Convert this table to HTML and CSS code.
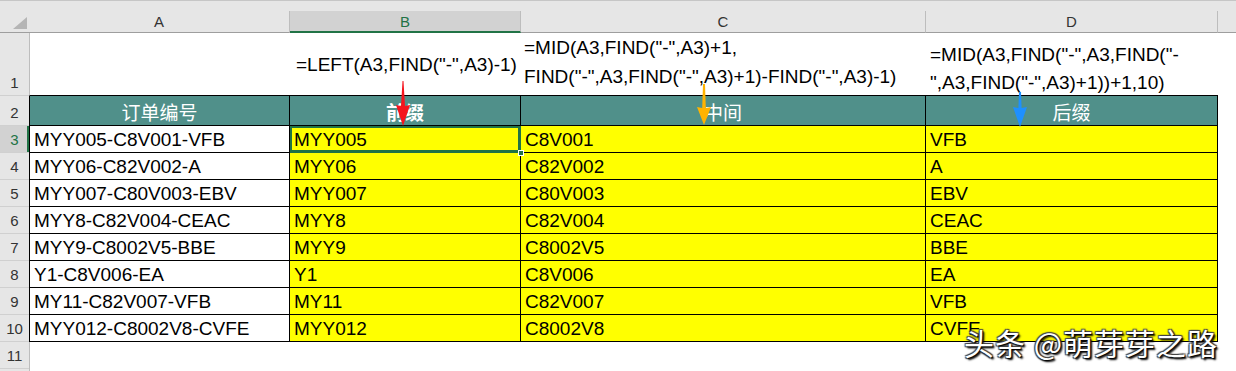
FILE: index.html
```html
<!DOCTYPE html>
<html>
<head>
<meta charset="utf-8">
<link rel="stylesheet" href="styles.css">
</head>
<body>
<div class="sheet">
  <div class="strip"></div>

  <div class="ch corner"><span class="tri"></span></div>
  <div class="ch">A</div>
  <div class="ch sel">B</div>
  <div class="ch">C</div>
  <div class="ch">D</div>
  <div class="ch last"></div>

  <div class="rh">1</div>
  <div class="c fa"></div>
  <div class="c fr fb">=LEFT(A3,FIND("-",A3)-1)</div>
  <div class="c fr fc">=MID(A3,FIND("-",A3)+1,<br>FIND("-",A3,FIND("-",A3)+1)-FIND("-",A3)-1)</div>
  <div class="c fr fd">=MID(A3,FIND("-",A3,FIND("-<br>",A3,FIND("-",A3)+1))+1,10)</div>
  <div class="c e"></div>

  <div class="rh">2</div>
  <div class="c hd a">订单编号</div>
  <div class="c hd bold">前缀</div>
  <div class="c hd">中间</div>
  <div class="c hd">后缀</div>
  <div class="c e"></div>

  <div class="rh rsel">3</div>
  <div class="c t a">MYY005-C8V001-VFB</div>
  <div class="c t y active">MYY005<span class="handle"></span></div>
  <div class="c t y">C8V001</div>
  <div class="c t y">VFB</div>
  <div class="c e"></div>

  <div class="rh">4</div>
  <div class="c t a">MYY06-C82V002-A</div>
  <div class="c t y">MYY06</div>
  <div class="c t y">C82V002</div>
  <div class="c t y">A</div>
  <div class="c e"></div>

  <div class="rh">5</div>
  <div class="c t a">MYY007-C80V003-EBV</div>
  <div class="c t y">MYY007</div>
  <div class="c t y">C80V003</div>
  <div class="c t y">EBV</div>
  <div class="c e"></div>

  <div class="rh">6</div>
  <div class="c t a">MYY8-C82V004-CEAC</div>
  <div class="c t y">MYY8</div>
  <div class="c t y">C82V004</div>
  <div class="c t y">CEAC</div>
  <div class="c e"></div>

  <div class="rh">7</div>
  <div class="c t a">MYY9-C8002V5-BBE</div>
  <div class="c t y">MYY9</div>
  <div class="c t y">C8002V5</div>
  <div class="c t y">BBE</div>
  <div class="c e"></div>

  <div class="rh">8</div>
  <div class="c t a">Y1-C8V006-EA</div>
  <div class="c t y">Y1</div>
  <div class="c t y">C8V006</div>
  <div class="c t y">EA</div>
  <div class="c e"></div>

  <div class="rh">9</div>
  <div class="c t a">MY11-C82V007-VFB</div>
  <div class="c t y">MY11</div>
  <div class="c t y">C82V007</div>
  <div class="c t y">VFB</div>
  <div class="c e"></div>

  <div class="rh">10</div>
  <div class="c t a">MYY012-C8002V8-CVFE</div>
  <div class="c t y">MYY012</div>
  <div class="c t y">C8002V8</div>
  <div class="c t y">CVFE</div>
  <div class="c e"></div>

  <div class="rh">11</div>
  <div class="c blank a"></div>
  <div class="c blank"></div>
  <div class="c blank"></div>
  <div class="c blank"></div>
  <div class="c e"></div>

  <div class="rh rlast"></div>
  <div class="c blank a"></div>
  <div class="c blank"></div>
  <div class="c blank"></div>
  <div class="c blank"></div>
  <div class="c e"></div>

  <svg class="arrow red" width="16" height="46" viewBox="0 0 16 46"><path d="M7.5 0 L8.5 0 L10 25 L15 24 L8 45 L1 24 L6 25 Z" fill="#f5141e"/></svg>
  <svg class="arrow orange" width="16" height="42" viewBox="0 0 16 42"><path d="M7 0 L9 0 L9.8 24 L15 23 L8 41 L1 23 L6.2 24 Z" fill="#ffb300"/></svg>
  <svg class="arrow blue" width="16" height="36" viewBox="0 0 16 36"><path d="M7 0 L9 0 L9.6 16 L15 15 L8 35 L1 15 L6.4 16 Z" fill="#1e90ff"/></svg>

  <div class="watermark">头条 @萌芽芽之路</div>
</div>
</body>
</html>
```
FILE: styles.css
```css
html, body {
  margin: 0;
  padding: 0;
  background: #ffffff;
}
body {
  width: 1236px;
  height: 371px;
  overflow: hidden;
}
.sheet {
  position: relative;
  display: grid;
  grid-template-columns: 29px 261px 231px 405px 292px 18px;
  grid-template-rows: 11px 22px 63px 30px repeat(9, 27px) 10px;
  font-family: "Liberation Sans", Arial, "Noto Sans CJK SC", sans-serif;
  color: #000;
}
.strip {
  grid-column: 1 / -1;
  background: #e6e6e6;
  border-top: 1px solid #c6c6c6;
  box-sizing: border-box;
}
.ch {
  background: #e6e6e6;
  border-right: 1px solid #bdbdbd;
  border-bottom: 1px solid #9e9e9e;
  box-sizing: border-box;
  display: flex;
  align-items: center;
  justify-content: center;
  font-size: 15px;
  color: #333;
}
.ch.corner {
  position: relative;
  border-right: none;
}
.tri {
  position: absolute;
  left: 13px;
  top: 6px;
  width: 0;
  height: 0;
  border-left: 14px solid transparent;
  border-bottom: 12px solid #b5b5b5;
}
.ch.sel {
  background: #d2d2d2;
  color: #217346;
  border-bottom: 2px solid #217346;
}
.ch.last {
  border-right: none;
}
.rh {
  background: #e6e6e6;
  border-bottom: 1px solid #d0d0d0;
  box-sizing: border-box;
  display: flex;
  align-items: flex-end;
  justify-content: center;
  padding-bottom: 4px;
  font-size: 15px;
  color: #333;
}
.rh.rlast {
  border-bottom: none;
  padding-bottom: 0;
}
.rh.rsel {
  background: #d2d2d2;
  color: #217346;
  box-shadow: inset -2px 0 0 #217346;
}
.c {
  box-sizing: border-box;
  white-space: nowrap;
}
.c.e {
  background: #fff;
}
.fa {
  border-left: 1px solid #bdbdbd;
  border-bottom: 1px solid #000;
}
.fr {
  border-bottom: 1px solid #000;
  font-size: 19px;
  line-height: 29px;
}
.fb {
  padding: 17px 0 0 6px;
}
.fc {
  padding: 0 0 0 3px;
}
.fd {
  padding: 8px 0 0 4px;
  line-height: 28px;
}
.hd {
  background: #50908a;
  color: #fff;
  border-right: 1px solid #000;
  border-bottom: 1px solid #000;
  display: flex;
  align-items: center;
  justify-content: center;
  font-family: "Noto Sans CJK SC", sans-serif;
  font-size: 19px;
  padding-top: 2px;
}
.hd.bold {
  font-weight: bold;
}
.a {
  border-left: 1px solid #000;
}
.t {
  border-right: 1px solid #000;
  border-bottom: 1px solid #000;
  font-size: 19px;
  display: flex;
  align-items: center;
  padding: 1px 0 0 4px;
}
.y {
  background: #ffff00;
}
.active {
  position: relative;
  box-shadow: inset 0 0 0 2px #217346;
  border-right-color: #217346;
  border-bottom-color: #217346;
}
.handle {
  position: absolute;
  right: -4px;
  bottom: -4px;
  width: 6px;
  height: 6px;
  background: #217346;
  border: 1px solid #fff;
  box-sizing: border-box;
}
.blank.a {
  border-left: 1px solid #bdbdbd;
}
.arrow {
  position: absolute;
}
.arrow.red {
  left: 395px;
  top: 81px;
}
.arrow.orange {
  left: 696px;
  top: 84px;
}
.arrow.blue {
  left: 1012px;
  top: 92px;
}
.watermark {
  position: absolute;
  left: 964px;
  top: 324px;
  font-family: "Noto Sans CJK SC", sans-serif;
  font-size: 30px;
  line-height: 36px;
  color: #fff;
  letter-spacing: 1px;
  text-shadow: 1px 1px 1px #000, -1px -1px 1px #444, 1px -1px 1px #444, -1px 1px 1px #444, 2px 2px 2px #000;
}
```
